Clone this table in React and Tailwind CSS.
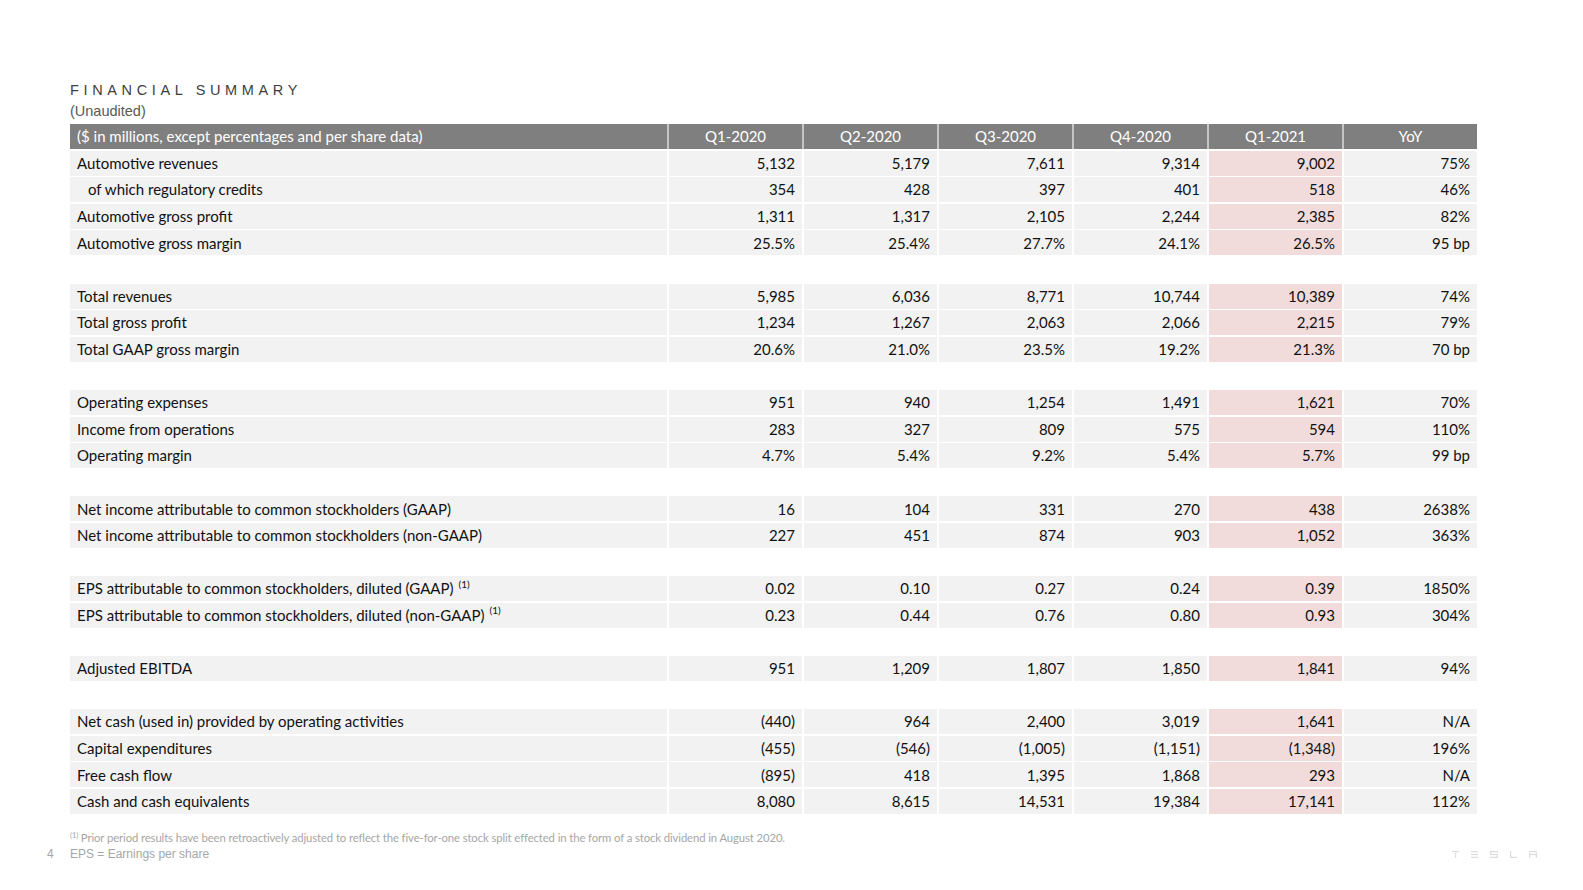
import React from "react";

const cols = ["Q1-2020", "Q2-2020", "Q3-2020", "Q4-2020", "Q1-2021", "YoY"];

const groups = [
  [
    ["Automotive revenues", ["5,132", "5,179", "7,611", "9,314", "9,002", "75%"]],
    ["of which regulatory credits", ["354", "428", "397", "401", "518", "46%"], "indent"],
    ["Automotive gross profit", ["1,311", "1,317", "2,105", "2,244", "2,385", "82%"]],
    ["Automotive gross margin", ["25.5%", "25.4%", "27.7%", "24.1%", "26.5%", "95 bp"]],
  ],
  [
    ["Total revenues", ["5,985", "6,036", "8,771", "10,744", "10,389", "74%"]],
    ["Total gross profit", ["1,234", "1,267", "2,063", "2,066", "2,215", "79%"]],
    ["Total GAAP gross margin", ["20.6%", "21.0%", "23.5%", "19.2%", "21.3%", "70 bp"]],
  ],
  [
    ["Operating expenses", ["951", "940", "1,254", "1,491", "1,621", "70%"]],
    ["Income from operations", ["283", "327", "809", "575", "594", "110%"]],
    ["Operating margin", ["4.7%", "5.4%", "9.2%", "5.4%", "5.7%", "99 bp"]],
  ],
  [
    ["Net income attributable to common stockholders (GAAP)", ["16", "104", "331", "270", "438", "2638%"]],
    ["Net income attributable to common stockholders (non-GAAP)", ["227", "451", "874", "903", "1,052", "363%"]],
  ],
  [
    ["EPS attributable to common stockholders, diluted (GAAP)", ["0.02", "0.10", "0.27", "0.24", "0.39", "1850%"], "sup"],
    ["EPS attributable to common stockholders, diluted (non-GAAP)", ["0.23", "0.44", "0.76", "0.80", "0.93", "304%"], "sup"],
  ],
  [["Adjusted EBITDA", ["951", "1,209", "1,807", "1,850", "1,841", "94%"]]],
  [
    ["Net cash (used in) provided by operating activities", ["(440)", "964", "2,400", "3,019", "1,641", "N/A"]],
    ["Capital expenditures", ["(455)", "(546)", "(1,005)", "(1,151)", "(1,348)", "196%"]],
    ["Free cash flow", ["(895)", "418", "1,395", "1,868", "293", "N/A"]],
    ["Cash and cash equivalents", ["8,080", "8,615", "14,531", "19,384", "17,141", "112%"]],
  ],
];

function Row({ label, values, kind }) {
  return (
    <div className="grid grid-cols-[597px_repeat(6,133px)] gap-x-[2px] h-[25px]">
      <div className={`bg-[#f2f2f2] flex items-center ${kind === "indent" ? "pl-[18px]" : "pl-[7px]"}`}>
        <span>{label}</span>
        {kind === "sup" && (
          <sup className="text-[10px] ml-[5px] top-[-5px]">(1)</sup>
        )}
      </div>
      {values.map((v, i) => (
        <div
          key={i}
          className={`${i === 4 ? "bg-[#f2dcdb]" : "bg-[#f2f2f2]"} flex items-center justify-end pr-[7px]`}
        >
          {v}
        </div>
      ))}
    </div>
  );
}

function TeslaLogo() {
  return (
    <svg width="86" height="7" viewBox="0 0 86 7" fill="#dcdcdc">
      <rect x="0" y="0" width="7" height="1.2" />
      <rect x="3" y="1.8" width="1.2" height="5" />
      <rect x="19" y="0" width="7" height="1.2" />
      <rect x="19" y="2.9" width="7" height="1.2" />
      <rect x="19" y="5.8" width="7" height="1.2" />
      <rect x="38" y="0" width="8" height="1.2" />
      <rect x="38" y="0" width="1.2" height="3.5" />
      <rect x="38" y="2.9" width="8" height="1.2" />
      <rect x="44.8" y="2.9" width="1.2" height="4" />
      <rect x="38" y="5.8" width="8" height="1.2" />
      <rect x="58" y="0" width="1.2" height="7" />
      <rect x="58" y="5.8" width="7" height="1.2" />
      <rect x="77" y="0" width="8" height="1.2" />
      <rect x="77" y="1.8" width="1.2" height="5.2" />
      <rect x="83.8" y="1.8" width="1.2" height="5.2" />
      <rect x="77" y="2.9" width="8" height="1.2" />
    </svg>
  );
}

export default function App() {
  return (
    <div className="w-[1583px] h-[890px] bg-white overflow-hidden flex flex-col pl-[70px] pt-[81px]">
      <div className="font-['Liberation_Sans',Arial,sans-serif] text-[14.5px] leading-[18px]">
        <div className="tracking-[0.32em] text-[#404040]">FINANCIAL SUMMARY</div>
        <div className="text-[#595959] mt-[3px]">(Unaudited)</div>
      </div>

      <div className="mt-[4px] w-[1407px] font-['Lato','Open_Sans',sans-serif] text-[15px] text-[#111]">
        <div className="grid grid-cols-[597px_repeat(6,133px)] gap-x-[2px] h-[25px] bg-[#c4c4c4] text-white">
          <div className="bg-[#7f7f7f] flex items-center pl-[7px]">($ in millions, except percentages and per share data)</div>
          {cols.map((c) => (
            <div key={c} className="bg-[#7f7f7f] flex items-center justify-center">{c}</div>
          ))}
        </div>
        <div className="flex flex-col gap-y-[1.6px] mt-[1.6px]">
          {groups.map((g, gi) => (
            <React.Fragment key={gi}>
              {gi > 0 && <div className="h-[25px]" />}
              {g.map(([label, values, kind]) => (
                <Row key={label} label={label} values={values} kind={kind} />
              ))}
            </React.Fragment>
          ))}
        </div>
      </div>

      <div className="mt-[17px] text-[11.3px] text-[#a6a6a6] font-['Lato',sans-serif] leading-[13px] tracking-[-0.1px]">
        <sup className="text-[7.5px]">(1)</sup> Prior period results have been retroactively adjusted to reflect the five-for-one stock split effected in the form of a stock dividend in August 2020.
      </div>
      <div className="-ml-[23px] mt-[3px] w-[1491px] flex items-center text-[12px] text-[#a6a6a6] font-['Liberation_Sans',Arial,sans-serif] leading-[15px]">
        <span className="w-[23px]">4</span>
        <span className="flex-1">EPS = Earnings per share</span>
        <TeslaLogo />
      </div>
    </div>
  );
}
